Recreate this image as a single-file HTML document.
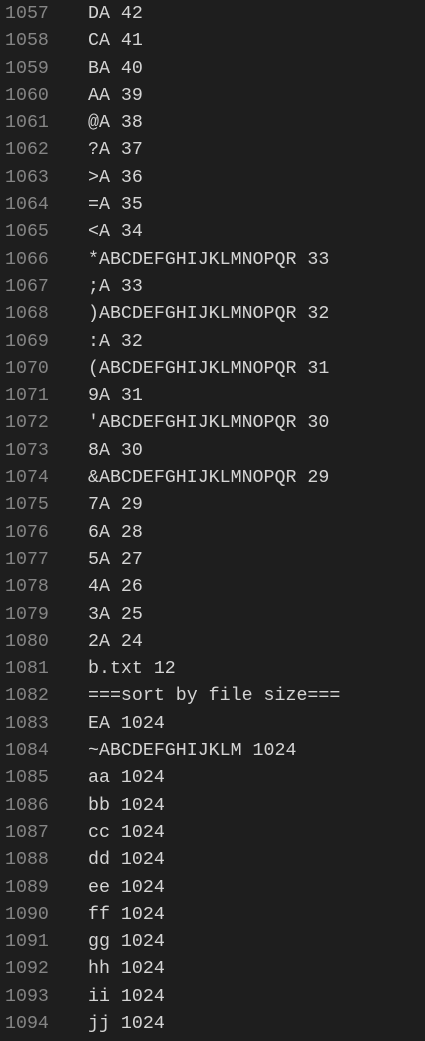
<!DOCTYPE html>
<html><head><meta charset="utf-8"><style>
html,body{margin:0;padding:0;background:#1e1e1e;width:425px;height:1041px;overflow:hidden}
.w{position:absolute;top:1px;left:0;font-family:"Liberation Mono",monospace;font-size:18.3px;line-height:27.3px;white-space:pre}
.l{display:block}
.n{display:inline-block;width:88px;padding-left:5px;box-sizing:border-box;color:#858585}
.t{color:#d4d4d4}
</style></head><body><div class="w"><span class="l"><span class="n">1057</span><span class="t">DA 42</span></span><span class="l"><span class="n">1058</span><span class="t">CA 41</span></span><span class="l"><span class="n">1059</span><span class="t">BA 40</span></span><span class="l"><span class="n">1060</span><span class="t">AA 39</span></span><span class="l"><span class="n">1061</span><span class="t">@A 38</span></span><span class="l"><span class="n">1062</span><span class="t">?A 37</span></span><span class="l"><span class="n">1063</span><span class="t">&gt;A 36</span></span><span class="l"><span class="n">1064</span><span class="t">=A 35</span></span><span class="l"><span class="n">1065</span><span class="t">&lt;A 34</span></span><span class="l"><span class="n">1066</span><span class="t">*ABCDEFGHIJKLMNOPQR 33</span></span><span class="l"><span class="n">1067</span><span class="t">;A 33</span></span><span class="l"><span class="n">1068</span><span class="t">)ABCDEFGHIJKLMNOPQR 32</span></span><span class="l"><span class="n">1069</span><span class="t">:A 32</span></span><span class="l"><span class="n">1070</span><span class="t">(ABCDEFGHIJKLMNOPQR 31</span></span><span class="l"><span class="n">1071</span><span class="t">9A 31</span></span><span class="l"><span class="n">1072</span><span class="t">'ABCDEFGHIJKLMNOPQR 30</span></span><span class="l"><span class="n">1073</span><span class="t">8A 30</span></span><span class="l"><span class="n">1074</span><span class="t">&amp;ABCDEFGHIJKLMNOPQR 29</span></span><span class="l"><span class="n">1075</span><span class="t">7A 29</span></span><span class="l"><span class="n">1076</span><span class="t">6A 28</span></span><span class="l"><span class="n">1077</span><span class="t">5A 27</span></span><span class="l"><span class="n">1078</span><span class="t">4A 26</span></span><span class="l"><span class="n">1079</span><span class="t">3A 25</span></span><span class="l"><span class="n">1080</span><span class="t">2A 24</span></span><span class="l"><span class="n">1081</span><span class="t">b.txt 12</span></span><span class="l"><span class="n">1082</span><span class="t">===sort by file size===</span></span><span class="l"><span class="n">1083</span><span class="t">EA 1024</span></span><span class="l"><span class="n">1084</span><span class="t">~ABCDEFGHIJKLM 1024</span></span><span class="l"><span class="n">1085</span><span class="t">aa 1024</span></span><span class="l"><span class="n">1086</span><span class="t">bb 1024</span></span><span class="l"><span class="n">1087</span><span class="t">cc 1024</span></span><span class="l"><span class="n">1088</span><span class="t">dd 1024</span></span><span class="l"><span class="n">1089</span><span class="t">ee 1024</span></span><span class="l"><span class="n">1090</span><span class="t">ff 1024</span></span><span class="l"><span class="n">1091</span><span class="t">gg 1024</span></span><span class="l"><span class="n">1092</span><span class="t">hh 1024</span></span><span class="l"><span class="n">1093</span><span class="t">ii 1024</span></span><span class="l"><span class="n">1094</span><span class="t">jj 1024</span></span></div></body></html>
